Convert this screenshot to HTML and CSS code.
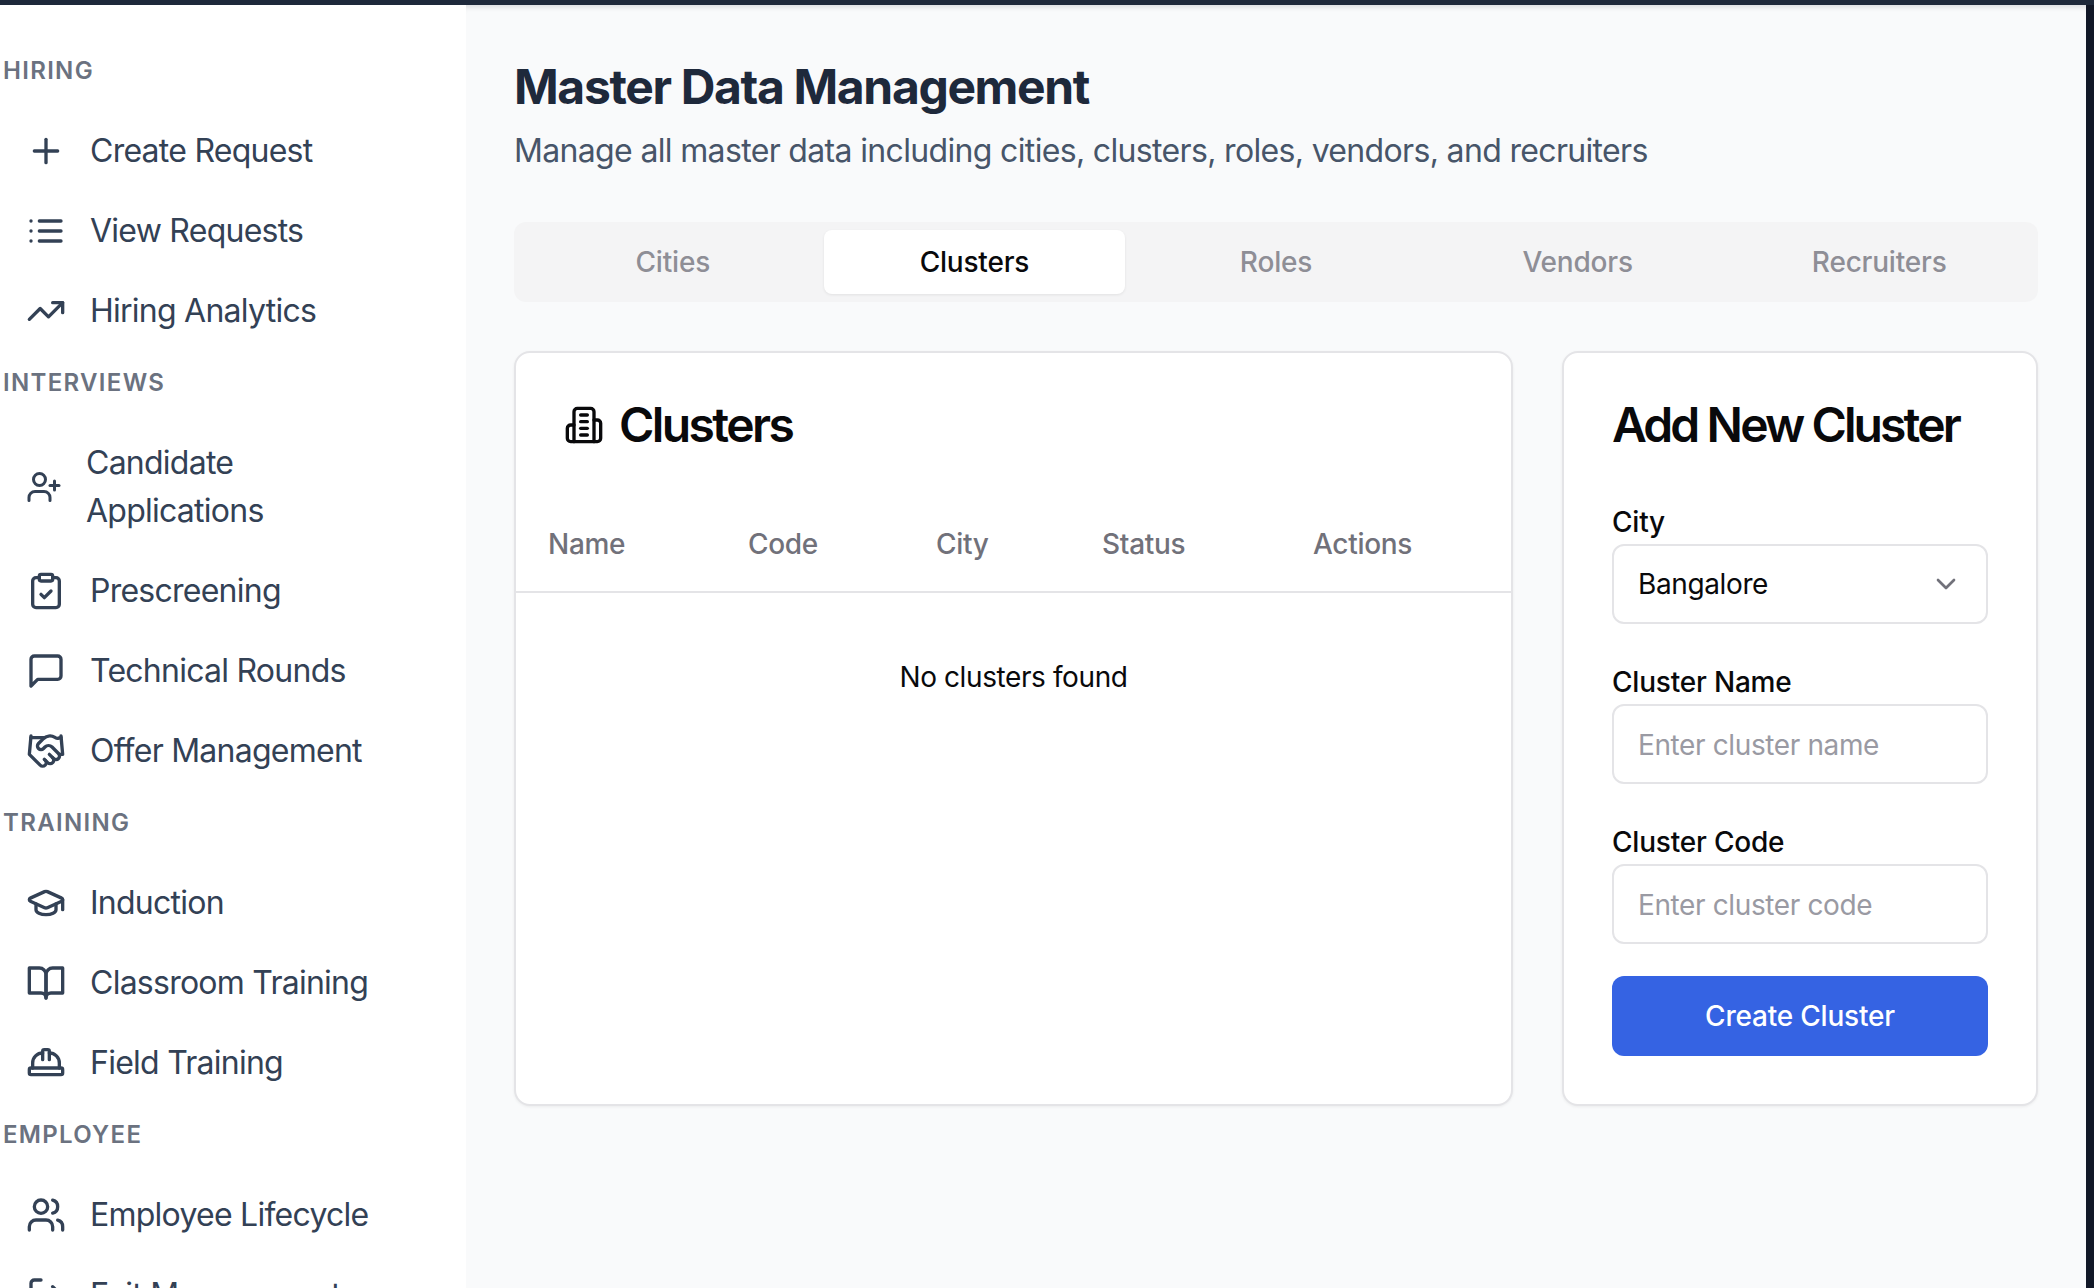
FILE: index.html
```html
<!DOCTYPE html>
<html lang="en">
<head>
  <meta charset="UTF-8">
  <title>Master Data Management</title>
  <link rel="stylesheet" href="styles.css">
</head>
<body>
  <div class="topbar"></div>
  <div class="layout">
    <aside class="sidebar">
      <div class="nav-label">HIRING</div>
      <a class="nav-item">
        <svg class="icon" viewBox="0 0 24 24"><path d="M5 12h14"/><path d="M12 5v14"/></svg>
        <span>Create Request</span>
      </a>
      <a class="nav-item">
        <svg class="icon" viewBox="0 0 24 24"><path d="M8 6h13"/><path d="M8 12h13"/><path d="M8 18h13"/><path d="M3 6h.01"/><path d="M3 12h.01"/><path d="M3 18h.01"/></svg>
        <span>View Requests</span>
      </a>
      <a class="nav-item">
        <svg class="icon" viewBox="0 0 24 24"><polyline points="22 7 13.5 15.5 8.5 10.5 2 17"/><polyline points="16 7 22 7 22 13"/></svg>
        <span>Hiring Analytics</span>
      </a>

      <div class="nav-label">INTERVIEWS</div>
      <a class="nav-item nav-item-wrap">
        <svg class="icon" viewBox="0 0 24 24"><path d="M16 21v-2a4 4 0 0 0-4-4H6a4 4 0 0 0-4 4v2"/><circle cx="9" cy="7" r="4"/><path d="M19 8v6"/><path d="M22 11h-6"/></svg>
        <span>Candidate<br>Applications</span>
      </a>
      <a class="nav-item">
        <svg class="icon" viewBox="0 0 24 24"><rect x="8" y="2" width="8" height="4" rx="1"/><path d="M16 4h2a2 2 0 0 1 2 2v14a2 2 0 0 1-2 2H6a2 2 0 0 1-2-2V6a2 2 0 0 1 2-2h2"/><path d="m9 14 2 2 4-4"/></svg>
        <span>Prescreening</span>
      </a>
      <a class="nav-item">
        <svg class="icon" viewBox="0 0 24 24"><path d="M21 15a2 2 0 0 1-2 2H7l-4 4V5a2 2 0 0 1 2-2h14a2 2 0 0 1 2 2z"/></svg>
        <span>Technical Rounds</span>
      </a>
      <a class="nav-item">
        <svg class="icon" viewBox="0 0 24 24"><path d="m11 17 2 2a1 1 0 1 0 3-3"/><path d="m14 14 2.5 2.5a1 1 0 1 0 3-3l-3.88-3.88a3 3 0 0 0-4.24 0l-.88.88a1 1 0 1 1-3-3l2.81-2.81a5.79 5.79 0 0 1 7.06-.87l.47.28a2 2 0 0 0 1.42.25L21 4"/><path d="m21 3 1 11h-2"/><path d="M3 3 2 14l6.5 6.5a1 1 0 1 0 3-3"/><path d="M3 4h8"/></svg>
        <span>Offer Management</span>
      </a>

      <div class="nav-label">TRAINING</div>
      <a class="nav-item">
        <svg class="icon" viewBox="0 0 24 24"><path d="M21.42 10.922a1 1 0 0 0-.019-1.838L12.83 5.18a2 2 0 0 0-1.66 0L2.6 9.08a1 1 0 0 0 0 1.832l8.57 3.908a2 2 0 0 0 1.66 0z"/><path d="M22 10v6"/><path d="M6 12.5V16a6 3 0 0 0 12 0v-3.5"/></svg>
        <span>Induction</span>
      </a>
      <a class="nav-item">
        <svg class="icon" viewBox="0 0 24 24"><path d="M2 3h6a4 4 0 0 1 4 4v14a3 3 0 0 0-3-3H2z"/><path d="M22 3h-6a4 4 0 0 0-4 4v14a3 3 0 0 1 3-3h7z"/></svg>
        <span>Classroom Training</span>
      </a>
      <a class="nav-item">
        <svg class="icon" viewBox="0 0 24 24"><path d="M10 10V5a1 1 0 0 1 1-1h2a1 1 0 0 1 1 1v5"/><path d="M14 6a6 6 0 0 1 6 6v3"/><path d="M4 15v-3a6 6 0 0 1 6-6"/><rect x="2" y="15" width="20" height="4" rx="1"/></svg>
        <span>Field Training</span>
      </a>

      <div class="nav-label">EMPLOYEE</div>
      <a class="nav-item">
        <svg class="icon" viewBox="0 0 24 24"><path d="M16 21v-2a4 4 0 0 0-4-4H6a4 4 0 0 0-4 4v2"/><circle cx="9" cy="7" r="4"/><path d="M22 21v-2a4 4 0 0 0-3-3.87"/><path d="M16 3.13a4 4 0 0 1 0 7.75"/></svg>
        <span>Employee Lifecycle</span>
      </a>
      <a class="nav-item">
        <svg class="icon" viewBox="0 0 24 24"><path d="M9 21H5a2 2 0 0 1-2-2V5a2 2 0 0 1 2-2h4"/><polyline points="16 17 21 12 16 7"/><path d="M21 12H9"/></svg>
        <span>Exit Management</span>
      </a>
    </aside>

    <main class="main">
      <h1>Master Data Management</h1>
      <p class="subtitle">Manage all master data including cities, clusters, roles, vendors, and recruiters</p>

      <div class="tabs">
        <div class="tab">Cities</div>
        <div class="tab active">Clusters</div>
        <div class="tab">Roles</div>
        <div class="tab">Vendors</div>
        <div class="tab">Recruiters</div>
      </div>

      <div class="panels">
        <section class="card">
          <h2 class="card-title list-title">
            <svg class="title-icon" viewBox="0 0 24 24"><path d="M6 22V4a2 2 0 0 1 2-2h8a2 2 0 0 1 2 2v18Z"/><path d="M6 12H4a2 2 0 0 0-2 2v6a2 2 0 0 0 2 2h2"/><path d="M18 9h2a2 2 0 0 1 2 2v9a2 2 0 0 1-2 2h-2"/><path d="M10 6h4"/><path d="M10 10h4"/><path d="M10 14h4"/><path d="M10 18h4"/></svg>
            Clusters
          </h2>
          <table class="data-table">
            <thead>
              <tr>
                <th>Name</th>
                <th>Code</th>
                <th>City</th>
                <th>Status</th>
                <th>Actions</th>
              </tr>
            </thead>
            <tbody>
              <tr>
                <td colspan="5">No clusters found</td>
              </tr>
            </tbody>
          </table>
        </section>

        <section class="card form-card">
          <h2 class="card-title">Add New Cluster</h2>
          <div class="form-group">
            <label>City</label>
            <div class="field select-field">
              <span>Bangalore</span>
              <svg class="chevron" viewBox="0 0 24 24"><path d="m6 9 6 6 6-6"/></svg>
            </div>
          </div>
          <div class="form-group">
            <label for="clusterName">Cluster Name</label>
            <input class="field" id="clusterName" type="text" placeholder="Enter cluster name">
          </div>
          <div class="form-group">
            <label for="clusterCode">Cluster Code</label>
            <input class="field" id="clusterCode" type="text" placeholder="Enter cluster code">
          </div>
          <button class="primary-btn">Create Cluster</button>
        </section>
      </div>
    </main>

    <div class="edge"></div>
  </div>
</body>
</html>
```

FILE: styles.css
```css
* {
  box-sizing: border-box;
}
html, body {
  height: 100%;
}
body {
  margin: 0;
  overflow: hidden;
  display: flex;
  flex-direction: column;
  font-family: Inter, "Liberation Sans", sans-serif;
  background: #f9fafb;
}
.topbar {
  height: 5px;
  flex: none;
  background: #1e293b;
}
.layout {
  flex: 1;
  min-height: 0;
  display: flex;
}

/* sidebar */
.sidebar {
  width: 466px;
  flex: none;
  padding-top: 50px;
  background: #fff;
  overflow: hidden;
}
.nav-label {
  height: 32px;
  line-height: 32px;
  margin-bottom: 24px;
  padding-left: 3px;
  font-size: 24px;
  font-weight: 600;
  letter-spacing: 0.055em;
  color: #6b7280;
}
.nav-item + .nav-label {
  margin-top: 16px;
}
.nav-item {
  display: flex;
  align-items: center;
  gap: 24px;
  padding: 16px 26px;
  font-size: 32px;
  line-height: 48px;
  letter-spacing: -0.75px;
  color: #334155;
}
.nav-item-wrap .icon {
  width: 36px;
}
.icon {
  width: 40px;
  height: 40px;
  flex: none;
  fill: none;
  stroke: #334155;
  stroke-width: 2;
  stroke-linecap: round;
  stroke-linejoin: round;
}

/* main */
.main {
  flex: 1;
  min-width: 0;
  padding: 48px 48px 0;
  box-shadow: inset 0 7px 6px -6px rgba(15, 23, 42, 0.18);
}
h1 {
  margin: 0;
  font-size: 48px;
  line-height: 68px;
  font-weight: 700;
  letter-spacing: -1.35px;
  color: #1e293b;
}
.subtitle {
  margin: 6px 0 47px;
  font-size: 32px;
  line-height: 48px;
  letter-spacing: -0.66px;
  color: #475569;
}
.tabs {
  display: grid;
  grid-template-columns: repeat(5, 1fr);
  height: 80px;
  padding: 8px;
  background: #f4f4f5;
  border-radius: 12px;
}
.tab {
  display: flex;
  align-items: center;
  justify-content: center;
  font-size: 28px;
  font-weight: 500;
  letter-spacing: -0.2px;
  color: #8e8e96;
  border-radius: 8px;
}
.tab.active {
  background: #fff;
  color: #09090b;
  box-shadow: 0 1px 3px rgba(0, 0, 0, 0.08);
}
.panels {
  display: grid;
  grid-template-columns: 1fr 476px;
  gap: 49px;
  margin-top: 49px;
}
.card {
  background: #fff;
  border: 2px solid #e4e4e7;
  border-radius: 16px;
  box-shadow: 0 1px 3px rgba(0, 0, 0, 0.06);
  overflow: hidden;
}
.card-title {
  margin: 0;
  font-size: 48px;
  line-height: 48px;
  font-weight: 600;
  letter-spacing: -2.9px;
  color: #09090b;
}
.list-title {
  display: flex;
  align-items: center;
  gap: 15px;
  padding: 48px 48px 47px;
  letter-spacing: -2.6px;
}
.title-icon {
  width: 40px;
  height: 40px;
  fill: none;
  stroke: #09090b;
  stroke-width: 2;
  stroke-linecap: round;
  stroke-linejoin: round;
}
.data-table {
  width: 100%;
  border-collapse: collapse;
  table-layout: fixed;
  font-size: 28px;
  letter-spacing: -0.3px;
}
.data-table th {
  height: 96px;
  padding: 0 32px;
  text-align: left;
  font-weight: 500;
  color: #71717a;
  border-bottom: 2px solid #e4e4e7;
}
.data-table th:nth-child(1) { width: 200px; }
.data-table th:nth-child(2) { width: 188px; }
.data-table th:nth-child(3) { width: 166px; }
.data-table th:nth-child(4) { width: 211px; }
.data-table td {
  padding: 64px 32px;
  line-height: 40px;
  text-align: center;
  letter-spacing: -0.4px;
  color: #09090b;
}

/* add form */
.form-card {
  padding: 48px;
}
.form-group {
  margin-top: 37px;
}
.form-group:first-of-type {
  margin-top: 52px;
}
label {
  display: block;
  margin-bottom: 2px;
  padding-top: 1px;
  font-size: 28px;
  line-height: 40px;
  font-weight: 500;
  letter-spacing: -0.2px;
  color: #09090b;
}
.field {
  display: block;
  width: 100%;
  height: 80px;
  padding: 2px 24px 0;
  font-family: inherit;
  font-size: 28px;
  letter-spacing: -0.38px;
  color: #09090b;
  background: #fff;
  border: 2px solid #e4e4e7;
  border-radius: 12px;
}
.field::placeholder {
  color: #9a9aa3;
  opacity: 1;
}
.select-field {
  display: flex;
  align-items: center;
  justify-content: space-between;
  padding-top: 0;
}
.chevron {
  width: 32px;
  height: 32px;
  fill: none;
  stroke: #71717a;
  stroke-width: 2;
  stroke-linecap: round;
  stroke-linejoin: round;
}
.primary-btn {
  display: block;
  width: 100%;
  height: 80px;
  margin-top: 32px;
  font-family: inherit;
  font-size: 28px;
  font-weight: 500;
  letter-spacing: -0.2px;
  color: #fff;
  background: #3563e3;
  border: none;
  border-radius: 12px;
}
.edge {
  width: 8px;
  flex: none;
  background: #111827;
}
```
